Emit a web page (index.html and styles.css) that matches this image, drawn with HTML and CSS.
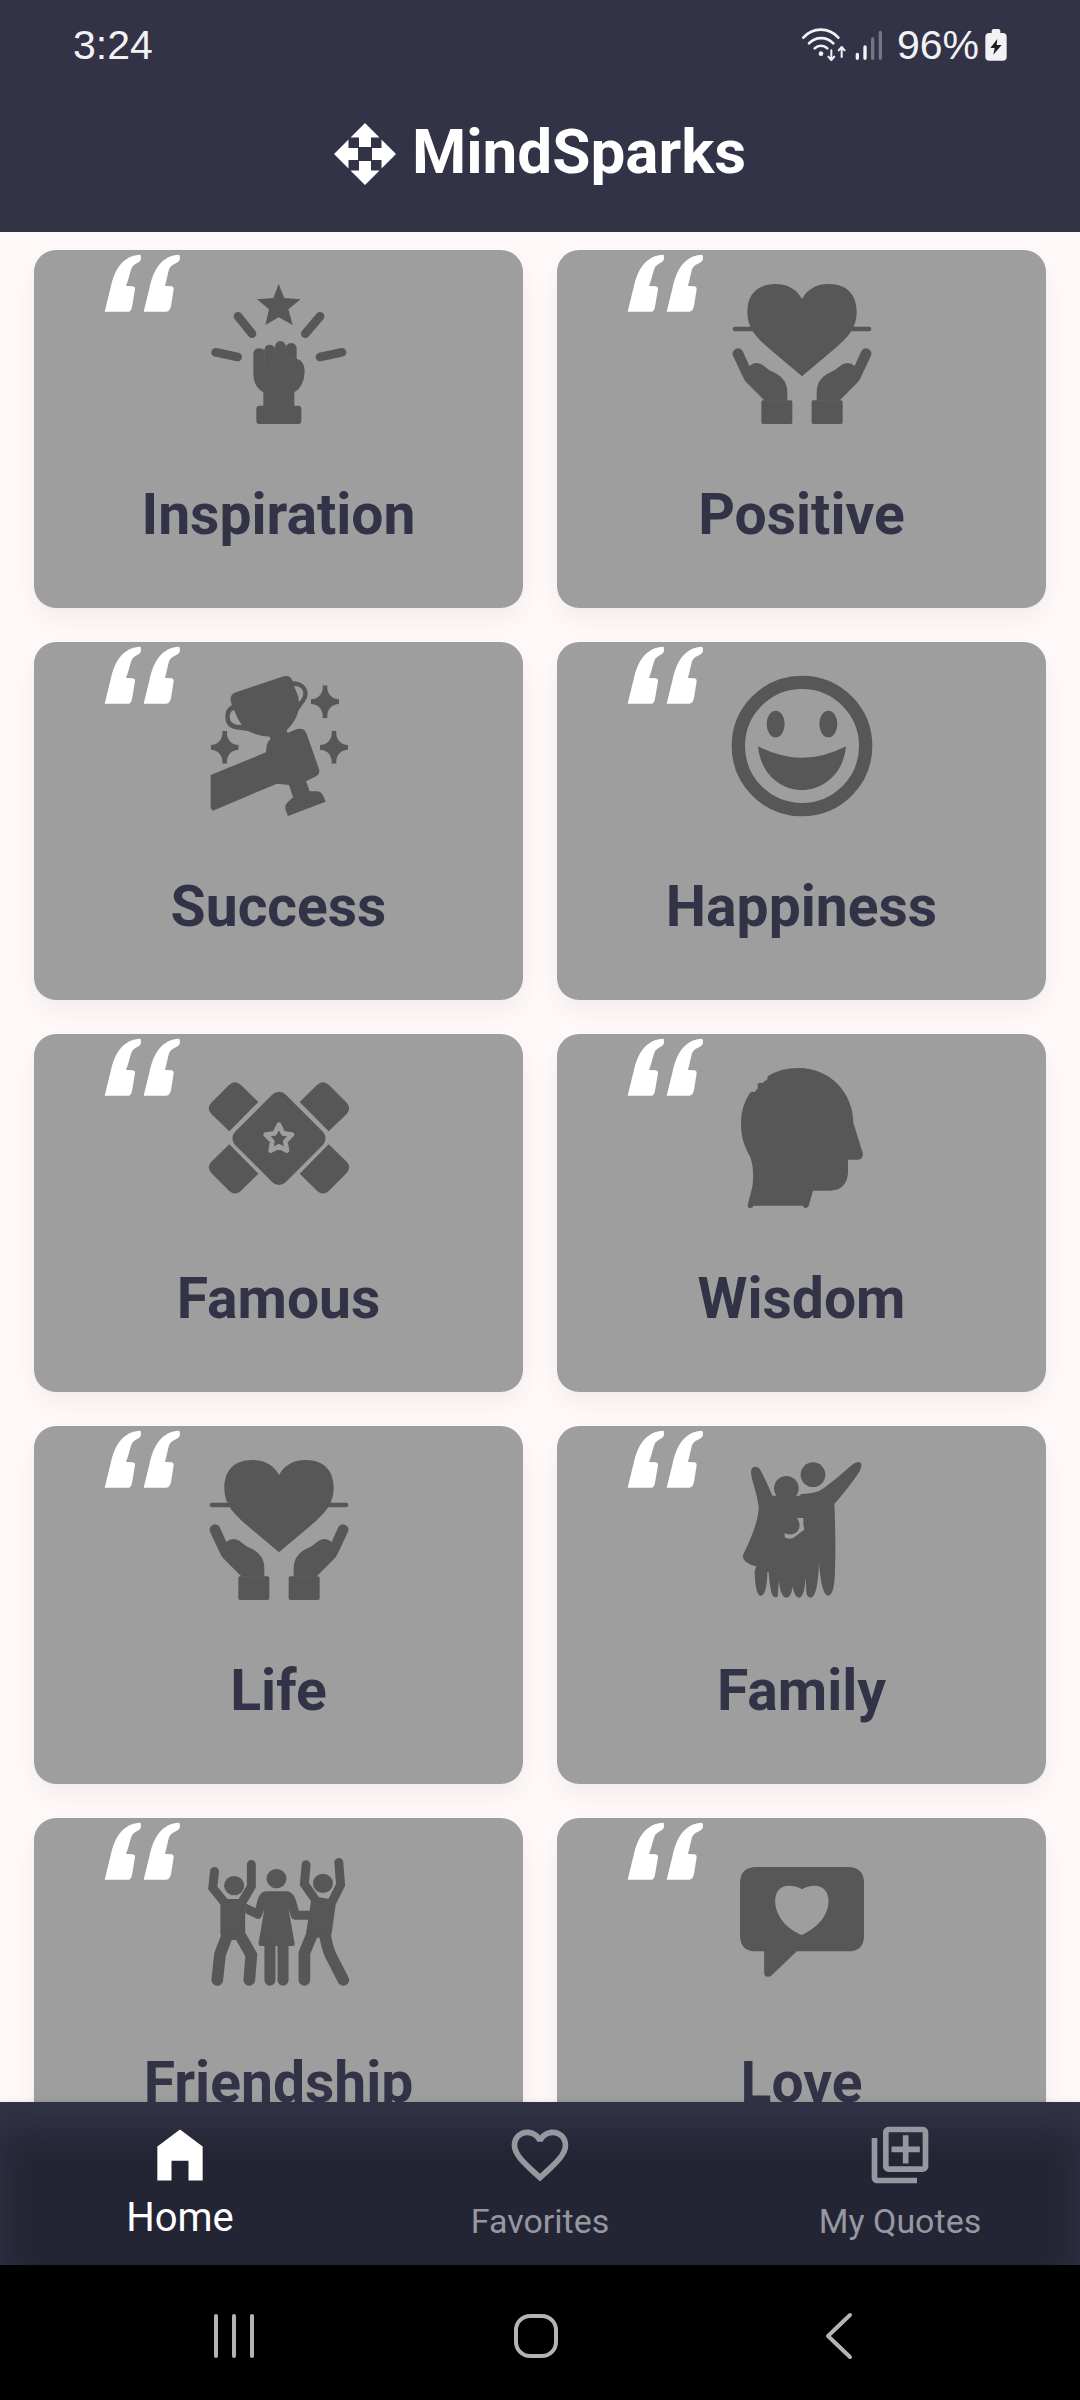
FILE: index.html
```html
<!DOCTYPE html>
<html lang="en">
<head>
<meta charset="utf-8">
<meta name="viewport" content="width=device-width, initial-scale=1">
<title>MindSparks</title>
<link rel="stylesheet" href="styles.css">
</head>
<body>
<svg class="sprite" aria-hidden="true">
  <symbol id="quote" viewBox="252 42 231 174">
    <path id="quote-mark" d="M254 215L272 142C284 85 312 45 362 44L363 54Q363 64 352 69C338 76 335 82 331 96Q325 120 318 138L338 139Q346 141 345 148L336 200Q333 215 325 215Z"/>
    <path d="M371 215L389 142C401 85 429 45 478 44L480 54Q480 64 469 69C453 76 447 84 445 96L435 138L455 139Q462 141 461 148L453 198Q449 215 439 215Z"/>
  </symbol>
  <symbol id="heart-hands" viewBox="575 132 420 420">
    <path d="M785 177C770 150 745 132 705 132C650 132 621 165 621 215C621 270 655 298 695 333L785 409L875 333C915 298 949 270 949 215C949 165 920 132 865 132C825 132 800 150 785 177Z"/>
    <path d="M584 267H640M930 267H986" stroke="currentColor" stroke-width="14" stroke-linecap="round"/>
    <g id="hand">
      <path d="M578 347A16 16 0 0 1 608 335L627 378Q645 362 666 374Q685 392 710 402Q741 420 741 457V482H673L617 426Q612 420 608 411Z"/>
      <rect x="663" y="481" width="93" height="71" rx="5"/>
    </g>
    <use href="#hand" transform="translate(1570 0) scale(-1 1)"/>
  </symbol>
  <symbol id="sparkle" viewBox="-42 -49 84 98">
    <path d="M-7-49H7V-38C10-20 22-8 42-7V7C22 8 10 20 7 38V49H-7V38C-10 20-22 8-42 7V-7C-22-8-10-20-7-38Z"/>
  </symbol>
</svg>

<header class="app-header">
  <div class="status-bar">
    <span class="status-time">3:24</span>
    <div class="status-icons">
      <svg class="wifi" viewBox="56 38 141 108" aria-hidden="true">
        <g fill="none" stroke="currentColor" stroke-width="8" stroke-linecap="round" stroke-linejoin="round">
          <path d="M63 70A69 69 0 0 1 168 70M80 87A50 50 0 0 1 153 87M97 102A27 27 0 0 1 135 102"/>
          <path d="M147 108V136M138 127L147 137L156 127M178 128V100M169 108L178 98L187 108" stroke-width="6"/>
        </g>
        <circle cx="116" cy="118" r="7"/>
      </svg>
      <svg class="signal" viewBox="218 46 87 93" aria-hidden="true">
        <g stroke="currentColor" stroke-width="10" stroke-linecap="round">
          <path d="M228 119V131M251 97V131"/>
          <path d="M274 73V131M297 53V131" opacity=".35"/>
        </g>
      </svg>
      <span class="status-battery">96%</span>
      <svg class="battery" viewBox="617 42 66 96" aria-hidden="true">
        <path d="M637 48Q637 42 643 42H657Q663 42 663 48V54H670Q682 54 682 66V126Q682 137 670 137H630Q618 137 618 126V66Q618 54 630 54H637Z"/>
        <path class="bolt" d="M654 72L633 99H646L642 119L667 90H652Z"/>
      </svg>
    </div>
  </div>
  <div class="toolbar">
    <svg class="logo" viewBox="0 0 62 62" aria-hidden="true">
      <path id="arrow" d="M31 0L45.500 14.500H37V24H25V14.500H16.500Z"/>
      <use href="#arrow" transform="rotate(90 31 31)"/>
      <use href="#arrow" transform="rotate(180 31 31)"/>
      <use href="#arrow" transform="rotate(270 31 31)"/>
    </svg>
    <h1 class="app-title">MindSparks</h1>
  </div>
</header>

<main class="categories">
  <a class="card" href="#inspiration">
    <svg class="card-quote" aria-hidden="true"><use href="#quote"/></svg>
    <svg class="card-icon" viewBox="566 132 420 420" aria-hidden="true">
      <path d="M775 132L792 174L841 178L804 208L817 255L775 232L735 255L746 208L710 178L759 174Z"/>
      <path d="M653 229L695 281M899 229L855 281M586 337L652 351M965 337L899 351" stroke="currentColor" stroke-width="26" stroke-linecap="round"/>
      <path d="M699 341Q700 326 715 325Q727 325 732 330Q734 314 747 314Q758 314 764 323Q765 304 780 303Q794 304 797 320Q801 309 813 309Q829 311 829 326V356Q853 362 853 395Q851 440 822 457V497H834Q843 497 843 506V543Q843 552 834 552H717Q708 552 708 543V506Q708 497 717 497H729V457Q699 440 699 400Z"/>
      <path class="card-line" d="M732 330V360M764 323V356M797 320V355M829 356H790Q752 354 752 387Q738 385 732 366Q728 386 715 386Q703 385 700 372"/>
    </svg>
    <span class="card-title">Inspiration</span>
  </a>
  <a class="card" href="#positive">
    <svg class="card-quote" aria-hidden="true"><use href="#quote"/></svg>
    <svg class="card-icon" aria-hidden="true"><use href="#heart-hands"/></svg>
    <span class="card-title">Positive</span>
  </a>
  <a class="card" href="#success">
    <svg class="card-quote" aria-hidden="true"><use href="#quote"/></svg>
    <svg class="card-icon" viewBox="566 138 420 420" aria-hidden="true">
      <path fill-rule="evenodd" d="M643 188L790 139Q810 134 817 154C842 153 862 168 862 192Q861 208 848 222L834 242Q830 268 799 301L802 309L828 298Q850 291 858 309L896 417Q901 432 885 440L857 454L868 484H888Q903 484 910 500L916 515L803 558L798 545Q790 528 802 517L818 502L806 465L770 461L578 542L571 535V435L737 367Q738 335 750 328L748 320Q710 318 683 303L655 299Q615 296 615 260Q615 235 635 225L631 212Q629 194 643 188ZM821 168Q849 168 849 192Q848 202 836 216L834 200ZM641 239Q650 265 664 285L650 284Q628 280 628 260Q628 245 641 239Z"/>
      <use href="#sparkle" x="872" y="166" width="84" height="98"/>
      <use href="#sparkle" x="571" y="303" width="84" height="98"/>
      <use href="#sparkle" x="899" y="303" width="84" height="98"/>
    </svg>
    <span class="card-title">Success</span>
  </a>
  <a class="card" href="#happiness">
    <svg class="card-quote" aria-hidden="true"><use href="#quote"/></svg>
    <svg class="card-icon" viewBox="575 138 420 420" aria-hidden="true">
      <circle cx="785" cy="348" r="191" fill="none" stroke="currentColor" stroke-width="40"/>
      <ellipse cx="706" cy="282" rx="27" ry="40"/>
      <ellipse cx="864" cy="282" rx="27" ry="40"/>
      <path d="M653 349Q785 418 917 349C910 430 850 480 785 480C720 480 660 430 653 349Z"/>
    </svg>
    <span class="card-title">Happiness</span>
  </a>
  <a class="card" href="#famous">
    <svg class="card-quote" aria-hidden="true"><use href="#quote"/></svg>
    <svg class="card-icon" viewBox="566 144 420 420" aria-hidden="true">
      <path id="ribbon" d="M714 246L627 334L573 282Q558 265 573 248L626 195Q644 178 662 195Z"/>
      <use href="#ribbon" transform="translate(1552 0) scale(-1 1)"/>
      <use href="#ribbon" transform="translate(0 707) scale(1 -1)"/>
      <use href="#ribbon" transform="translate(1552 707) scale(-1 -1)"/>
      <rect x="669" y="248" width="214" height="214" rx="28" transform="rotate(45 776 355)"/>
      <path class="card-star" d="M776 314L788 340L815 344L795 364L800 392L776 379L751 392L756 364L736 344L763 340Z"/>
    </svg>
    <span class="card-title">Famous</span>
  </a>
  <a class="card" href="#wisdom">
    <svg class="card-quote" aria-hidden="true"><use href="#quote"/></svg>
    <svg class="card-icon" viewBox="575 144 420 420" aria-hidden="true">
      <path d="M682 169Q720 144 775 144C870 144 939 220 939 308L967 398Q970 418 952 419H923V458Q920 510 868 512H818L805 558Q799 567 790 562L788 557H640Q636 566 625 563Q621 560 623 552L636 500Q643 450 631 413C610 375 602 350 602 308Q602 260 628 220Q636 213 642 217L653 204Q648 190 658 188L666 189L681 178Z"/>
    </svg>
    <span class="card-title">Wisdom</span>
  </a>
  <a class="card" href="#life">
    <svg class="card-quote" aria-hidden="true"><use href="#quote"/></svg>
    <svg class="card-icon" aria-hidden="true"><use href="#heart-hands"/></svg>
    <span class="card-title">Life</span>
  </a>
  <a class="card" href="#family">
    <svg class="card-quote" aria-hidden="true"><use href="#quote"/></svg>
    <svg class="card-icon" viewBox="575 153 420 420" aria-hidden="true">
      <circle cx="738" cy="238" r="37"/>
      <circle cx="818" cy="197" r="37"/>
      <path fill-rule="evenodd" d="M632 190Q632 173 645 173Q656 173 663 188Q682 224 696 260H780V256Q830 254 850 238Q890 208 932 170Q952 154 961 162Q967 170 957 188Q930 230 882 285Q887 400 884 480Q883 558 864 560Q843 560 836 462Q832 564 811 566Q800 566 798 550L796 505Q792 566 776 566Q762 563 757 533Q752 566 738 566Q720 564 716 515L712 563Q698 570 693 550Q686 520 685 490H681Q680 558 661 561Q644 557 643 486L648 472Q607 462 607 440Q657 340 655 290Q650 260 640 227Q632 200 632 190ZM770 327H789V346L792 362L758 387Q745 392 733 384V372Q753 383 770 369Q786 350 770 327Z"/>
    </svg>
    <span class="card-title">Family</span>
  </a>
  <a class="card" href="#friendship">
    <svg class="card-quote" aria-hidden="true"><use href="#quote"/></svg>
    <svg class="card-icon" viewBox="626 159 420 420" aria-hidden="true">
      <g transform="scale(1.033 1)">
        <circle cx="679" cy="260" r="29"/>
        <circle cx="802" cy="239" r="29"/>
        <circle cx="937" cy="253" r="29"/>
        <path d="M655 300H692L711 312V405L700 423H652L639 405V318ZM926 295L955 300L974 316L962 405L945 416H905L888 400Q895 360 902 308Z"/>
        <path d="M772 277H832Q850 280 857 300L867 335H902V362H855Q846 362 844 352L837 330L855 435Q855 441 848 441H756Q749 441 750 432L767 330L759 352Q755 362 745 359L711 343V313L741 327L748 300Q756 278 772 277Z"/>
        <g fill="none" stroke="currentColor" stroke-linecap="round">
          <path stroke-width="26" d="M622 217L617 267L650 309M729 196V262L702 309M888 197L883 255L916 304M983 190L988 258L963 309"/>
          <path stroke-width="34" d="M658 412L638 466L630 543M697 410L729 468L723 543M905 407L883 462V543M943 408Q950 450 960 470L996 543"/>
          <path stroke-width="32" d="M783 440V544M821 440V544"/>
        </g>
      </g>
    </svg>
    <span class="card-title">Friendship</span>
  </a>
  <a class="card" href="#love">
    <svg class="card-quote" aria-hidden="true"><use href="#quote"/></svg>
    <svg class="card-icon" viewBox="575 159 420 420" aria-hidden="true">
      <path transform="scale(1.033 1)" fill-rule="evenodd" d="M628 204H892Q940 204 940 252V410Q940 457 892 457H745L672 529Q665 535 658 533Q650 530 650 521V457H628Q580 457 580 410V252Q580 204 628 204ZM760 271Q745 260 722 260C695 260 682 280 682 305C682 350 715 390 760 408C805 385 837 350 837 305C837 280 823 260 796 260Q775 260 760 271Z"/>
    </svg>
    <span class="card-title">Love</span>
  </a>
</main>

<nav class="tabs" aria-label="Main">
  <a class="tab tab-active" href="#home">
    <svg class="tab-icon" viewBox="0 0 24 24" aria-hidden="true"><path d="M4 21V9l8-6 8 6v12h-5v-7H9v7z"/></svg>
    <span>Home</span>
  </a>
  <a class="tab" href="#favorites">
    <svg class="tab-icon" viewBox="0 0 24 24" aria-hidden="true"><path d="M16.500 3c-1.740 0-3.410.81-4.500 2.090C10.910 3.810 9.240 3 7.500 3 4.420 3 2 5.420 2 8.500c0 3.780 3.400 6.860 8.550 11.540L12 21.350l1.450-1.320C18.600 15.360 22 12.280 22 8.500 22 5.420 19.580 3 16.500 3zm-4.400 15.550l-.1.100-.1-.1C7.140 14.240 4 11.390 4 8.500 4 6.500 5.500 5 7.500 5c1.540 0 3.040.99 3.570 2.360h1.870C13.460 5.990 14.960 5 16.500 5c2 0 3.500 1.500 3.500 3.500 0 2.890-3.140 5.740-7.900 10.050z"/></svg>
    <span>Favorites</span>
  </a>
  <a class="tab" href="#my-quotes">
    <svg class="tab-icon" viewBox="0 0 24 24" aria-hidden="true"><path d="M4 6H2v14c0 1.100.9 2 2 2h14v-2H4V6zm16-4H8c-1.100 0-2 .9-2 2v12c0 1.100.9 2 2 2h12c1.100 0 2-.9 2-2V4c0-1.100-.9-2-2-2zm0 14H8V4h12v12zm-7-1h2v-4h4V9h-4V5h-2v4H9v2h4z"/></svg>
    <span>My Quotes</span>
  </a>
</nav>

<div class="system-bar">
  <button class="system-button" type="button" aria-label="Recent apps">
    <svg viewBox="0 0 46 46" aria-hidden="true"><path d="M5 3V43M23 3V43M41 3V43"/></svg>
  </button>
  <button class="system-button" type="button" aria-label="Home screen">
    <svg viewBox="0 0 46 46" aria-hidden="true"><rect x="3" y="3" width="40" height="40" rx="14"/></svg>
  </button>
  <button class="system-button" type="button" aria-label="Back">
    <svg viewBox="0 0 46 46" aria-hidden="true"><path d="M34 2L12 23L34 44"/></svg>
  </button>
</div>
</body>
</html>
```
FILE: styles.css
```css
:root {
  --navy: #323347;
  --navy-dark: #242534;
  --muted: #9797a0;
  --page: #fff9f9;
  --card: #9e9e9e;
  --card-icon: #575757;
}

* {
  box-sizing: border-box;
}

body {
  margin: 0;
  height: 100vh;
  display: flex;
  flex-direction: column;
  background: var(--page);
  font-family: Roboto, "Liberation Sans", sans-serif;
}

svg {
  display: block;
  fill: currentColor;
  overflow: visible;
}

a {
  text-decoration: none;
}

.sprite {
  position: absolute;
  width: 0;
  height: 0;
}

/* Header */

.app-header {
  flex: none;
  background: var(--navy);
  color: #fff;
}

.status-bar {
  display: flex;
  align-items: center;
  justify-content: space-between;
  height: 76px;
  padding: 14px 73px 0;
  color: #f2f2f4;
  font-family: "Liberation Sans", sans-serif;
  font-size: 41px;
  line-height: 48px;
}

.status-icons {
  display: flex;
  align-items: center;
  gap: 6px;
}

.wifi {
  width: 47px;
  height: 36px;
}

.signal {
  width: 29px;
  height: 31px;
  margin-right: 8px;
}

.battery {
  width: 22px;
  height: 32px;
}

.bolt {
  fill: #1d1d22;
}

.toolbar {
  display: flex;
  align-items: center;
  justify-content: center;
  gap: 16px;
  height: 156px;
}

.logo {
  width: 62px;
  height: 62px;
}

.app-title {
  margin: 0;
  padding-bottom: 4px;
  font-size: 62px;
  font-weight: 700;
  line-height: 76px;
}

/* Category grid */

.categories {
  flex: 1;
  min-height: 0;
  overflow-y: auto;
  scrollbar-width: none;
  display: grid;
  grid-template-columns: 1fr 1fr;
  align-content: start;
  gap: 34px;
  padding: 18px 34px 34px;
}

.card {
  position: relative;
  display: flex;
  flex-direction: column;
  align-items: center;
  gap: 58px;
  padding: 34px 0 60px;
  border-radius: 22px;
  background: var(--card);
  box-shadow: 0 11px 28px rgba(0, 0, 0, 0.06);
}

.card-quote {
  position: absolute;
  top: 4px;
  left: 70px;
  width: 77px;
  height: 58px;
  color: #fff;
}

.card-icon {
  width: 140px;
  height: 140px;
  color: var(--card-icon);
}

.card-line {
  fill: none;
  stroke: #626262;
  stroke-width: 2;
}

.card-star {
  stroke: var(--card);
  stroke-width: 14;
  stroke-linejoin: round;
}

.card-title {
  color: var(--navy);
  font-size: 57px;
  font-weight: 700;
  line-height: 66px;
}

/* Tabs */

.tabs {
  position: relative;
  flex: none;
  display: grid;
  grid-template-columns: repeat(3, 1fr);
  height: 163px;
  padding-top: 19px;
  background: var(--navy-dark);
  box-shadow: inset 0 28px 36px var(--navy), 0 -2px 6px rgba(0, 0, 0, 0.06);
}

.tab {
  display: flex;
  flex-direction: column;
  align-items: center;
  gap: 8px;
  color: var(--muted);
  font-size: 34px;
  line-height: 48px;
}

.tab-active {
  color: #fff;
  font-size: 40px;
  line-height: 42px;
}

.tab-icon {
  width: 68px;
  height: 68px;
}

/* System navigation */

.system-bar {
  flex: none;
  display: grid;
  grid-template-columns: repeat(3, 1fr);
  height: 135px;
  padding: 7px 90px 0 83px;
  background: #000;
}

.system-button {
  display: flex;
  align-items: center;
  justify-content: center;
  padding: 0;
  border: 0;
  background: none;
  color: #b4b4b4;
}

.system-button svg {
  width: 46px;
  height: 46px;
  fill: none;
  stroke: currentColor;
  stroke-width: 4;
  stroke-linecap: round;
  stroke-linejoin: round;
}
```
